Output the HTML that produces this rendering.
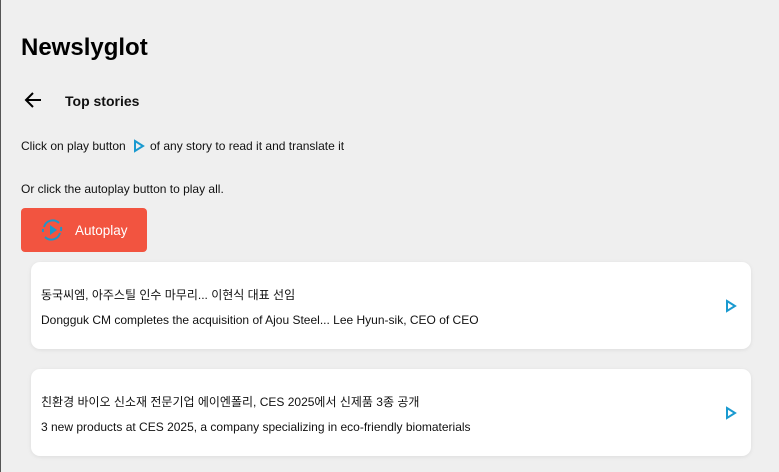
<!DOCTYPE html>
<html><head><meta charset="utf-8"><style>
body{margin:0;width:779px;height:472px;overflow:hidden;background:#efefef;font-family:"Liberation Sans","Noto Sans CJK KR",sans-serif;color:#111;position:relative}
.a{position:absolute}
h1{position:absolute;left:21px;top:34px;margin:0;font-size:24px;font-weight:bold;color:#000}
.card{position:absolute;left:31px;width:720px;height:87px;background:#fff;border-radius:9px;box-shadow:0 1px 4px rgba(0,0,0,0.08)}
.card .k{position:absolute;left:10px;top:24px;font-size:12px}
.card .e{position:absolute;left:10px;top:51px;font-size:12px}
.card svg{position:absolute;right:14px;top:37px}
</style></head><body>
<div class="a" style="left:0;top:0;width:1px;height:472px;background:#555"></div>
<h1>Newslyglot</h1>
<svg class="a" style="left:23px;top:91px" width="20" height="18" viewBox="0 0 20 18"><path d="M18 9H3M10 2L3 9l7 7" fill="none" stroke="#000" stroke-width="2"/></svg>
<div class="a" style="left:65px;top:93px;font-size:14px;font-weight:bold">Top stories</div>
<div class="a" style="left:21px;top:139px;font-size:12px">Click on play button</div>
<svg class="a" style="left:133px;top:139px" width="12" height="14" viewBox="0 0 12 14"><path d="M2 2L10 7L2 12Z" fill="none" stroke="#1a9ad0" stroke-width="2"/></svg>
<div class="a" style="left:150px;top:139px;font-size:12px">of any story to read it and translate it</div>
<div class="a" style="left:21px;top:182px;font-size:12px">Or click the autoplay button to play all.</div>
<div class="a" style="left:21px;top:208px;width:126px;height:44px;background:#f25440;border-radius:4px"></div>
<svg class="a" style="left:40px;top:218px" width="24" height="24" viewBox="0 0 24 24"><path d="M4 9A9 9 0 0 1 19 5" fill="none" stroke="#1e96c8" stroke-width="2"/><path d="M20 15A9 9 0 0 1 5 19" fill="none" stroke="#1e96c8" stroke-width="2"/><path d="M21 9A9 9 0 0 1 21 13M3 11A9 9 0 0 0 3 14" fill="none" stroke="#1e96c8" stroke-width="2"/><path d="M10 7L17 12L10 17Z" fill="#1e96c8"/></svg>
<div class="a" style="left:75px;top:223px;font-size:13.5px;color:#fff">Autoplay</div>
<div class="card" style="top:262px"><div class="k">동국씨엠, 아주스틸 인수 마무리... 이현식 대표 선임</div><div class="e">Dongguk CM completes the acquisition of Ajou Steel... Lee Hyun-sik, CEO of CEO</div><svg width="12" height="14" viewBox="0 0 12 14"><path d="M2 2L10 7L2 12Z" fill="none" stroke="#1a9ad0" stroke-width="2"/></svg></div>
<div class="card" style="top:369px"><div class="k">친환경 바이오 신소재 전문기업 에이엔폴리, CES 2025에서 신제품 3종 공개</div><div class="e">3 new products at CES 2025, a company specializing in eco-friendly biomaterials</div><svg width="12" height="14" viewBox="0 0 12 14"><path d="M2 2L10 7L2 12Z" fill="none" stroke="#1a9ad0" stroke-width="2"/></svg></div>
</body></html>
